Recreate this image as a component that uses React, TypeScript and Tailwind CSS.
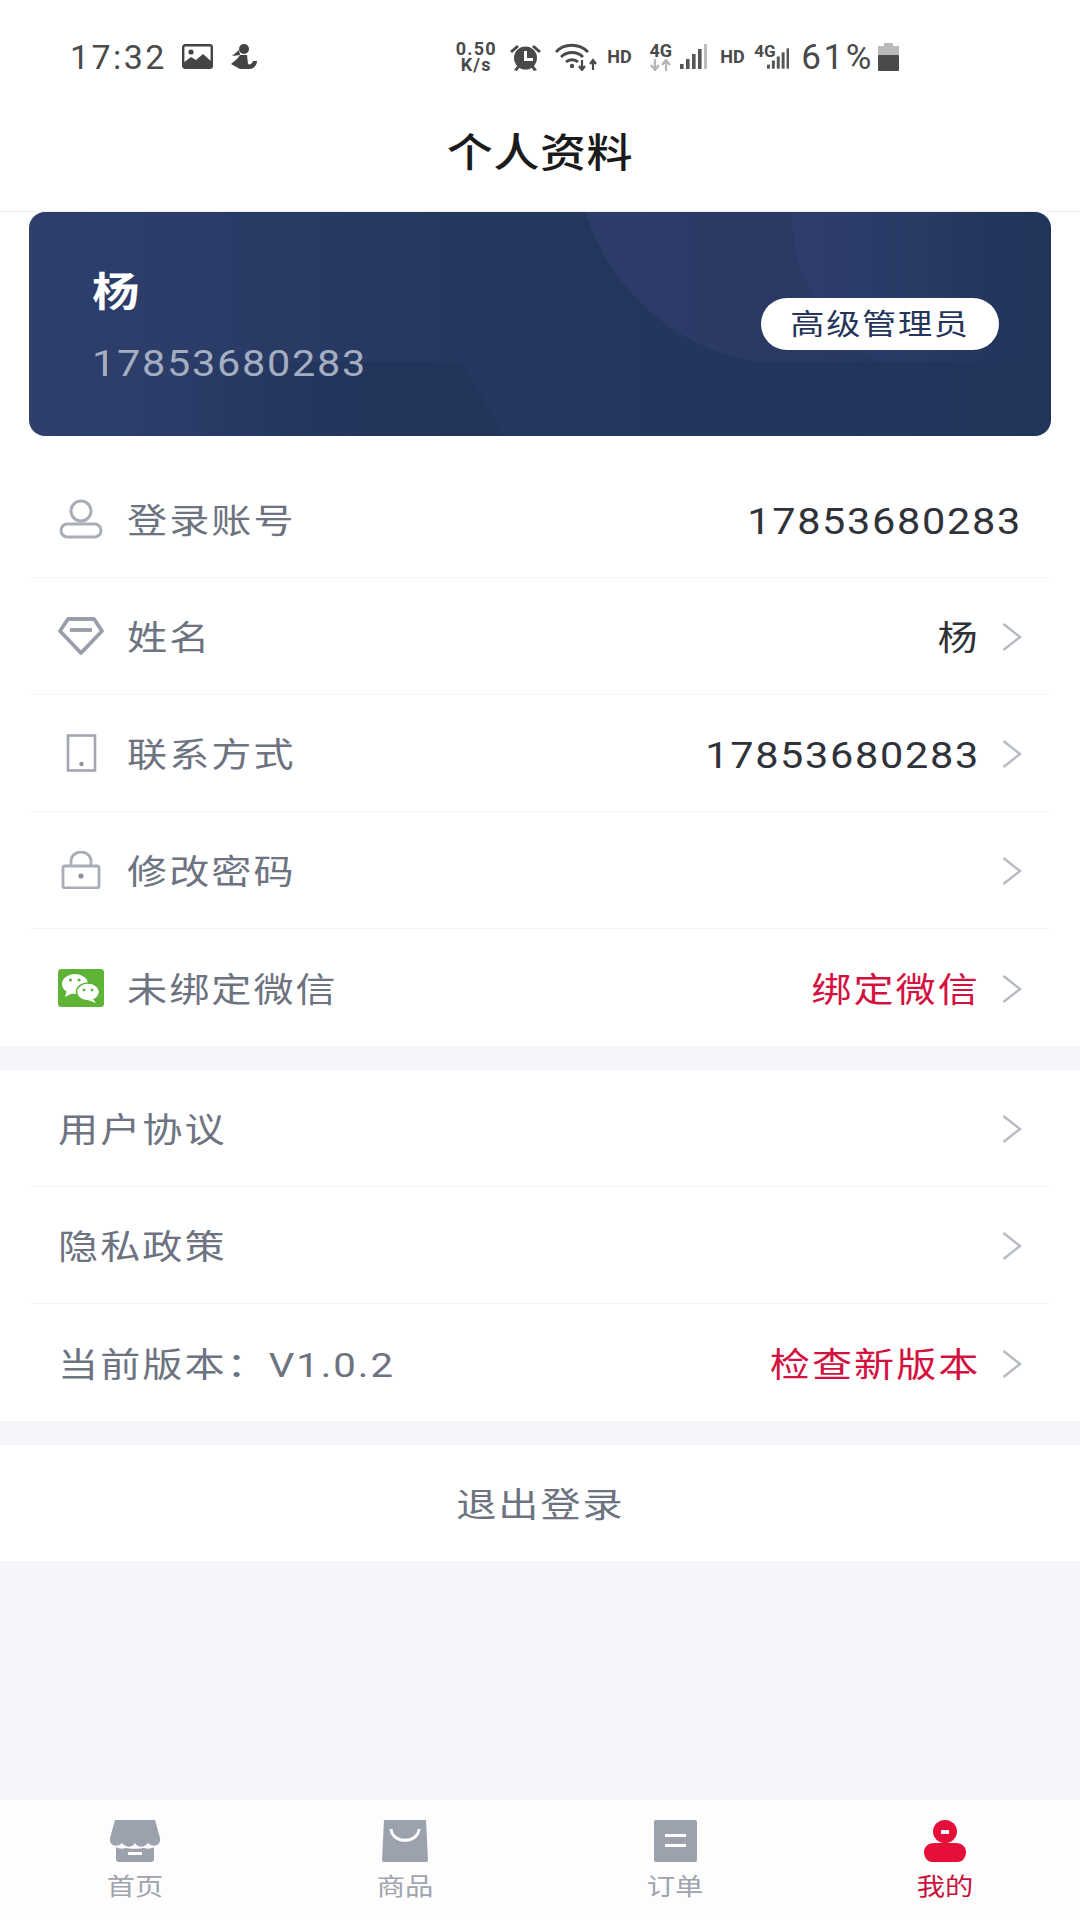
import React from 'react';

const Chevron = () => (
  <svg className="w-[20px] h-[30px] ml-[22px] shrink-0 relative top-[1px]" viewBox="0 0 20 30" fill="none" stroke="#b6bac4" strokeWidth="2.4">
    <path d="M1.5 2 L18 15 L1.5 28" />
  </svg>
);

const Cn = ({ children, className = '' }: { children: React.ReactNode; className?: string }) => (
  <span className={`inline-block whitespace-nowrap origin-left scale-x-[1.18] ${className}`}>{children}</span>
);

const CnRight = ({ children, className = '' }: { children: React.ReactNode; className?: string }) => (
  <span className={`inline-block whitespace-nowrap origin-right scale-x-[1.18] ${className}`}>{children}</span>
);

const UserIcon = () => (
  <svg className="w-[46px] h-[40px]" viewBox="0 0 46 40" fill="none" stroke="#a9adb6" strokeWidth="3">
    <ellipse cx="23" cy="12" rx="10" ry="10" />
    <rect x="3" y="25" width="40" height="13" rx="6.5" />
  </svg>
);

const DiamondIcon = () => (
  <svg className="w-[46px] h-[38px]" viewBox="0 0 46 38" fill="none" stroke="#9a9ea8" strokeWidth="3.8">
    <path d="M10 2 H36 L44 14 L23 36 L2 14 Z" strokeLinejoin="round" />
    <path d="M12 13 H34" />
  </svg>
);

const PhoneIcon = () => (
  <svg className="w-[46px] h-[38px]" viewBox="0 0 46 38" fill="none" stroke="#a2a6af" strokeWidth="2.6">
    <rect x="10" y="1.5" width="27" height="35" />
    <circle cx="23.5" cy="30" r="2.2" fill="#8d919c" stroke="none" />
  </svg>
);

const LockIcon = () => (
  <svg className="w-[46px] h-[38px]" viewBox="0 0 46 38" fill="none" stroke="#a9adb6" strokeWidth="2.8">
    <rect x="5" y="15" width="36" height="22" rx="2" />
    <path d="M13 15 V10 a10 9 0 0 1 20 0 V15" />
    <circle cx="23" cy="25" r="2.6" fill="#8d919c" stroke="none" />
  </svg>
);

const WechatIcon = () => (
  <svg className="w-[46px] h-[38px]" viewBox="0 0 46 38">
    <rect width="46" height="38" rx="3.5" fill="#5fb336" />
    <ellipse cx="17" cy="15" rx="13" ry="10" fill="#fff" />
    <path d="M9 21 L7 28 L15 24 Z" fill="#fff" />
    <ellipse cx="30" cy="23" rx="11.5" ry="9" fill="#fff" stroke="#5fb336" strokeWidth="1.4" />
    <path d="M35 30 L38 34 L30 31 Z" fill="#fff" />
    <circle cx="12.5" cy="11" r="1.6" fill="#5fb336" />
    <circle cx="21" cy="11" r="1.6" fill="#5fb336" />
    <circle cx="26" cy="21" r="1.4" fill="#5fb336" />
    <circle cx="34" cy="21" r="1.4" fill="#5fb336" />
  </svg>
);

const Signal = ({ dim, w = 27 }: { dim?: boolean; w?: number }) => (
  <svg width={w} height="25" viewBox="0 0 27 25" fill="#555">
    <rect x="0" y="20" width="3.6" height="5" />
    <rect x="6" y="15" width="3.6" height="10" />
    <rect x="12" y="10" width="3.6" height="15" />
    <rect x="18" y="5" width="3.6" height="20" />
    <rect x="24" y="0" width="3" height="25" fill={dim ? '#bdbdbd' : '#555'} />
  </svg>
);

const StatusBar = () => (
  <div className="h-[116px] flex items-center justify-between pl-[70px] pr-[181px] pb-[3px] text-[#4a4a4a]">
    <div className="flex items-center">
      <span className="text-[34px] tracking-[2.4px] leading-none">17:32</span>
      <svg className="ml-[15px]" width="31" height="25" viewBox="0 0 31 25">
        <rect x="1.2" y="1.2" width="28.6" height="22.6" rx="2" fill="#fff" stroke="#444" strokeWidth="2.4" />
        <circle cx="9" cy="8" r="2.6" fill="#444" />
        <path d="M1 24 V19 L9 13 L14 16 L21 10 L30 18 V24 Z" fill="#444" />
      </svg>
      <svg className="ml-[17px]" width="27" height="26" viewBox="0 0 27 26" fill="#444">
        <circle cx="14" cy="5" r="5" />
        <path d="M9 6 L2 12 L10 11 Z" />
        <path d="M10 11 H17 L18 20 C20 21 22 20 23 17 L27 17 C27 21 24 25 19 25 H10 L1 20 L7 15 Z" />
      </svg>
    </div>
    <div className="flex items-center">
      <div className="flex flex-col items-center text-[18px] font-bold tracking-[1.2px] leading-[16px] w-[44px]">
        <span>0.50</span>
        <span>K/s</span>
      </div>
      <svg className="ml-[11px]" width="33" height="28" viewBox="0 0 33 28" fill="#4a4a4a">
        <circle cx="16.5" cy="15" r="11.5" />
        <path d="M15 8 H18 V15 H24 V18 H15 Z" fill="#fff" />
        <path d="M1 8 L8 2 L10 4 L3 10 Z M32 8 L25 2 L23 4 L30 10 Z M5 27 L9 22 L11 24 L8 28 Z M28 27 L24 22 L22 24 L25 28 Z" />
      </svg>
      <svg className="ml-[13px]" width="42" height="28" viewBox="0 0 42 28" fill="none" stroke="#4a4a4a" strokeWidth="2.8">
        <path d="M1 9 C9 0 24 0 33 9" />
        <path d="M6 14 C12 8 22 8 28 14" />
        <path d="M11 19 C14 16 20 16 23 19" />
        <circle cx="17" cy="23" r="2.2" fill="#4a4a4a" stroke="none" />
        <path d="M27 17 V26 M24 23 L27 27 L30 23 M38 27 V18 M35 21 L38 17 L41 21" strokeWidth="2.2" />
      </svg>
      <span className="ml-[10px] text-[18px] font-bold leading-none w-[26px]">HD</span>
      <div className="ml-[15px] flex flex-col items-center w-[25px]">
        <span className="text-[18px] font-bold leading-[16px]">4G</span>
        <svg width="23" height="12" viewBox="0 0 23 12" fill="none" stroke="#b5b5b5" strokeWidth="2.2">
          <path d="M6 0 V10 M2 6 L6 11 L10 6 M17 12 V2 M13 6 L17 1 L21 6" />
        </svg>
      </div>
      <div className="ml-[7px]"><Signal dim /></div>
      <span className="ml-[13px] text-[18px] font-bold leading-none w-[26px]">HD</span>
      <div className="ml-[8px] relative w-[35px] h-[28px]">
        <span className="absolute left-0 top-0 text-[17px] font-bold leading-none">4G</span>
        <div className="absolute right-0 bottom-0"><Signal w={22} /></div>
      </div>
      <span className="ml-[12px] text-[35px] tracking-[2.6px] leading-none pt-[2px]">61%</span>
      <svg className="ml-[4px]" width="21" height="28" viewBox="0 0 21 28">
        <rect x="6" y="0" width="9" height="4" fill="#b9b9b9" />
        <rect x="0" y="3" width="21" height="10" fill="#b9b9b9" />
        <rect x="0" y="12" width="21" height="16" rx="1" fill="#4a4a4a" />
      </svg>
    </div>
  </div>
);

const Card = () => (
  <div className="relative mx-[29px] h-[224px] rounded-[16px] overflow-hidden bg-gradient-to-r from-[#2e3f6c] via-[#243860] via-40% to-[#21345a] flex items-center justify-between pl-[63px] pr-[52px]">
    <svg className="absolute inset-0 w-full h-full" viewBox="0 0 1022 224" preserveAspectRatio="none">
      <defs>
        <linearGradient id="shapeA" x1="0" y1="0" x2="1" y2="0">
          <stop offset="0" stopColor="#2e3c69" stopOpacity="0.9" />
          <stop offset="0.55" stopColor="#2c3b67" stopOpacity="0.7" />
          <stop offset="1" stopColor="#2c3b67" stopOpacity="0" />
        </linearGradient>
        <linearGradient id="shapeB" x1="0" y1="0" x2="1" y2="0">
          <stop offset="0" stopColor="#2f3e6d" stopOpacity="0.8" />
          <stop offset="1" stopColor="#2f3e6d" stopOpacity="0" />
        </linearGradient>
        <linearGradient id="shapeC" x1="0" y1="0" x2="1" y2="0">
          <stop offset="0" stopColor="#22345a" stopOpacity="0" />
          <stop offset="0.55" stopColor="#22345a" stopOpacity="0.9" />
          <stop offset="1" stopColor="#22345a" stopOpacity="1" />
        </linearGradient>
      </defs>
      <path d="M556 0 C585 80 640 133 728 150 H960 V0 Z" fill="url(#shapeA)" />
      <path d="M763 0 C763 50 780 105 850 150 H1000 V0 Z" fill="url(#shapeB)" />
      <path d="M150 150 H432 C448 175 465 205 474 224 H150 Z" fill="url(#shapeC)" />
    </svg>
    <div className="relative flex flex-col pt-[10px]">
      <Cn className="text-[40px] font-bold text-white leading-[46px] -mt-[1px]">杨</Cn>
      <span className="inline-block whitespace-nowrap origin-left scale-x-[1.15] text-[36px] tracking-[1.5px] text-[#a5adc0] leading-[46px] mt-[25px]">17853680283</span>
    </div>
    <div className="relative flex items-center justify-center w-[238px] h-[52px] rounded-full bg-white">
      <span className="inline-block origin-center scale-x-[1.18] text-[29px] tracking-[1.4px] text-[#24345a] whitespace-nowrap pt-[3px]">高级管理员</span>
    </div>
  </div>
);

type RowProps = {
  icon?: React.ReactNode;
  label: string;
  value?: string;
  red?: boolean;
  chevron?: boolean;
  last?: boolean;
};

const Row = ({ icon, label, value, red, chevron = true, last }: RowProps) => (
  <div className={`mx-[29px] px-[29px] h-[117px] flex items-center justify-between ${last ? '' : 'border-b border-[#f5f6f8]'}`}>
    <div className="flex items-center">
      {icon && <div className="w-[46px] mr-[23px] flex justify-center">{icon}</div>}
      <Cn className="text-[34px] tracking-[1.7px] pt-[5px] text-[#6d7380]">{label}</Cn>
    </div>
    <div className="flex items-center">
      {value && (
        /^\d+$/.test(value) ? (
          <span className="inline-block whitespace-nowrap origin-right scale-x-[1.15] text-[36px] tracking-[1.5px] pt-[5px] text-[#2f3239]">{value}</span>
        ) : (
          <CnRight className={`text-[34px] tracking-[1.7px] pt-[5px] ${red ? 'text-[#d3123f]' : 'text-[#2f3239]'}`}>{value}</CnRight>
        )
      )}
      {chevron && <Chevron />}
    </div>
  </div>
);

const tabs = [
  {
    label: '首页',
    icon: (
      <svg width="52" height="42" viewBox="0 0 52 42" fill="#9ca1ae">
        <path d="M6 0 H46 L51 18 C52 26 44 28 39 23 C35 28 29 28 26 23 C23 28 17 28 13 23 C8 28 0 26 1 18 Z" />
        <path d="M7 27 C10 29 14 29 17 28 C21 29 31 29 35 28 C38 29 42 29 45 27 V39 a3 3 0 0 1 -3 3 H10 a3 3 0 0 1 -3 -3 Z" />
        <rect x="19" y="32" width="14" height="3" fill="#fff" />
      </svg>
    ),
  },
  {
    label: '商品',
    icon: (
      <svg width="46" height="42" viewBox="0 0 46 42">
        <path d="M2 0 H44 L46 40 a2 2 0 0 1 -2 2 H2 a2 2 0 0 1 -2 -2 Z" fill="#9ca1ae" />
        <path d="M9 9 C10 24 36 24 37 9" fill="none" stroke="#fff" strokeWidth="3" />
      </svg>
    ),
  },
  {
    label: '订单',
    icon: (
      <svg width="43" height="42" viewBox="0 0 43 42">
        <rect width="43" height="42" rx="2" fill="#9ca1ae" />
        <rect x="11" y="14" width="21" height="3" fill="#fff" />
        <rect x="11" y="24" width="21" height="3" fill="#fff" />
      </svg>
    ),
  },
  {
    label: '我的',
    active: true,
    icon: (
      <svg width="42" height="42" viewBox="0 0 42 42" fill="#e60f3a">
        <ellipse cx="21" cy="11.5" rx="12" ry="11.5" />
        <rect x="17" y="10" width="8" height="4" fill="#fff" />
        <path d="M10 23 H32 C38 23 42 27 42 32 C42 38 38 42 34 42 H8 C4 42 0 38 0 32 C0 27 4 23 10 23 Z" />
      </svg>
    ),
  },
];

const TabBar = () => (
  <div className="h-[120px] bg-[#fdfdfe] grid grid-cols-4 pt-[20px]">
    {tabs.map((t) => (
      <div key={t.label} className="flex flex-col items-center">
        <div className="h-[42px] flex items-center">{t.icon}</div>
        <span className={`inline-block origin-center scale-x-[1.18] text-[24px] leading-[30px] mt-[10px] ${t.active ? 'text-[#c8123d]' : 'text-[#a0a4ae]'}`}>
          {t.label}
        </span>
      </div>
    ))}
  </div>
);

export default function App() {
  return (
    <div className="w-[1080px] h-[1920px] flex flex-col bg-[#f5f6fa] overflow-hidden font-['Roboto','Noto_Sans_CJK_SC',sans-serif]">
      <div className="bg-white h-[212px] border-b border-[#eeeeee] shrink-0">
        <StatusBar />
        <div className="flex justify-center">
          <span className="inline-block origin-center scale-x-[1.15] text-[40px] font-medium tracking-[0.5px] text-[#1b1b1b] leading-[76px]">个人资料</span>
        </div>
      </div>
      <div className="bg-white shrink-0">
        <Card />
        <div className="pt-[25px]">
          <Row icon={<UserIcon />} label="登录账号" value="17853680283" chevron={false} />
          <Row icon={<DiamondIcon />} label="姓名" value="杨" />
          <Row icon={<PhoneIcon />} label="联系方式" value="17853680283" />
          <Row icon={<LockIcon />} label="修改密码" />
          <Row icon={<WechatIcon />} label="未绑定微信" value="绑定微信" red last />
        </div>
      </div>
      <div className="bg-white mt-[24px] shrink-0">
        <Row label="用户协议" />
        <Row label="隐私政策" />
        <Row label="当前版本：V1.0.2" value="检查新版本" red last />
      </div>
      <div className="bg-white mt-[24px] h-[116px] flex items-center justify-center shrink-0">
        <span className="inline-block origin-center scale-x-[1.18] text-[34px] tracking-[1.7px] pt-[5px] text-[#6d7380]">退出登录</span>
      </div>
      <div className="flex-1" />
      <TabBar />
    </div>
  );
}
